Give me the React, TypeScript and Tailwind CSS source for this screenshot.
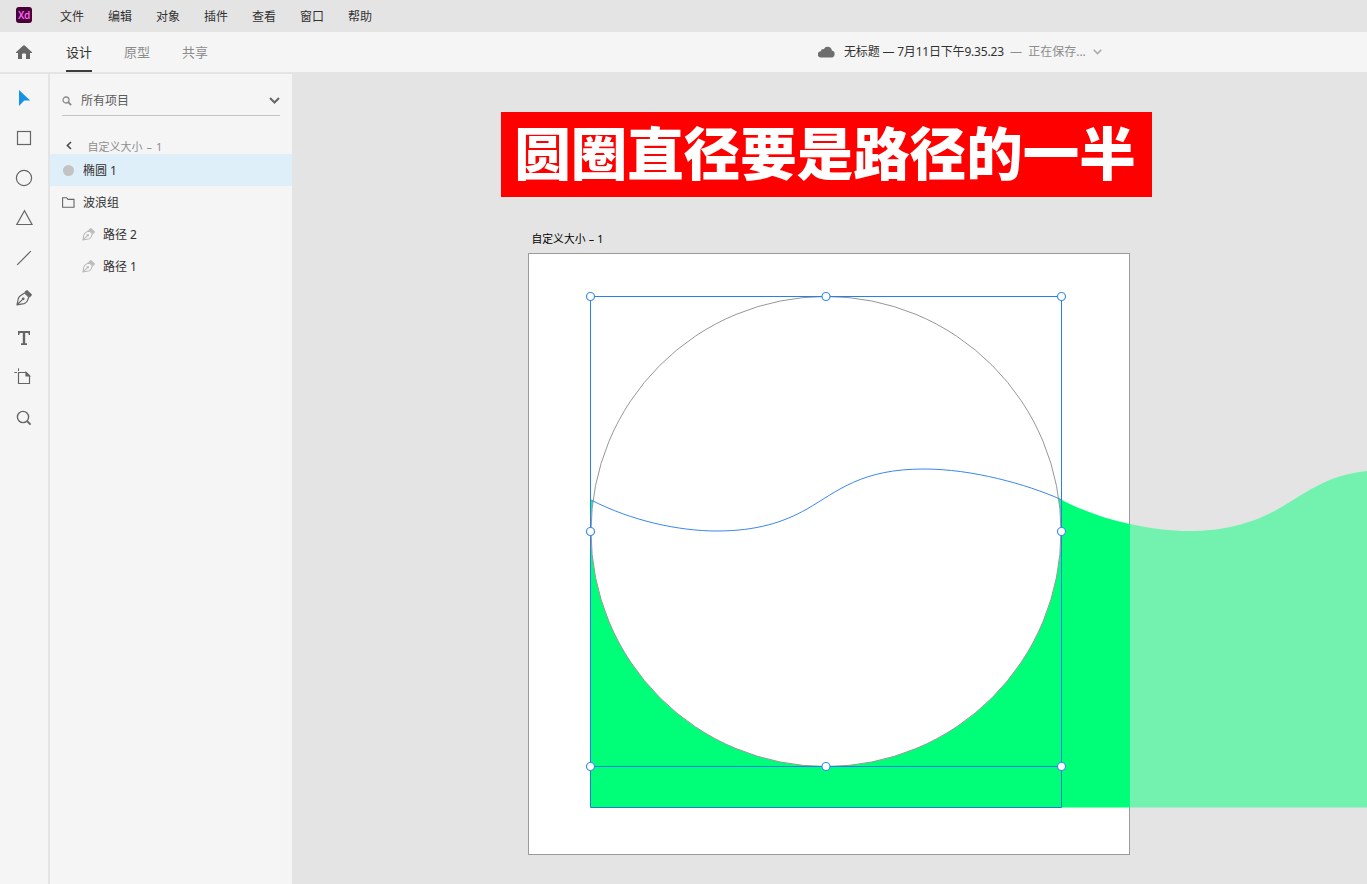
import React from "react";

const menus = ["文件", "编辑", "对象", "插件", "查看", "窗口", "帮助"];

function PenIcon({ className, sw }: { className: string; sw: number }) {
  return (
    <svg className={className} viewBox="0 0 16 16" fill="none" stroke="currentColor" strokeWidth={sw} strokeLinejoin="round">
      <path d="M1 14.8 L2.2 9 Q2.7 7 4.4 5.7 L8.6 2.9 L12.8 7.1 L11.2 11 Q10.2 13 8 13.6 Z M1 14.8 L6.4 9.6" />
      <circle cx="7.2" cy="8.8" r="0.8" fill="currentColor" />
      <path d="M9.2 1.9 L11 0.7 L15.3 4.8 L13.8 6.6 Z" fill="currentColor" />
    </svg>
  );
}

function Tool({ children }: { children: React.ReactNode }) {
  return <div className="flex h-10 w-12 shrink-0 items-center justify-center text-[#666]">{children}</div>;
}

function ToolRail() {
  const line = { width: 24, height: 24, viewBox: "0 0 24 24", fill: "none", stroke: "currentColor", strokeWidth: 1.2 };
  return (
    <nav className="flex w-[50px] shrink-0 flex-col border-r-2 border-[#e4e4e4] bg-[#f5f5f5] pt-1">
      <Tool>
        <svg width="24" height="24" viewBox="0 0 24 24"><path d="M7 4 V20 L12.2 14.5 H18.2 Z" fill="#1592e6" /></svg>
      </Tool>
      <Tool><svg {...line}><rect x="5.5" y="5.5" width="13" height="13" /></svg></Tool>
      <Tool><svg {...line}><circle cx="12" cy="12" r="7.6" /></svg></Tool>
      <Tool><svg {...line}><path d="M12.5 4.8 L20 18.5 H4.8 Z" /></svg></Tool>
      <Tool><svg {...line}><path d="M5.2 18.8 L18.8 5.2" /></svg></Tool>
      <Tool><PenIcon className="-mt-px h-4 w-4" sw={1.2} /></Tool>
      <Tool>
        <svg width="24" height="24" viewBox="0 0 24 24" fill="currentColor">
          <path d="M6 5 H18 V9 H16.8 L16.2 7 H13.2 V17.3 H15 V19 H9 V17.3 H10.8 V7 H7.8 L7.2 9 H6 Z" />
        </svg>
      </Tool>
      <Tool>
        <svg {...line}>
          <path d="M6.5 6.5 H14.3 L17.5 9.7 V17.5 H6.5 Z" />
          <path d="M14 6.5 V10 H17.5 Z" fill="currentColor" />
          <path d="M2.3 6.5 H5 M6.5 2.3 V5" strokeWidth="1" />
        </svg>
      </Tool>
      <Tool><svg {...line} strokeWidth="1.4"><circle cx="11" cy="11" r="5.6" /><path d="M15 15 L18.6 18.6" strokeWidth="1.8" /></svg></Tool>
    </nav>
  );
}

function LayersPanel() {
  return (
    <aside className="flex w-[242px] shrink-0 flex-col bg-[#f5f5f5] text-[12px] text-[#323232]">
      <div className="mx-3 mt-3 flex h-[30px] items-center border-b border-[#c4c4c4] text-[#5c5c5c]">
        <svg width="10" height="10" viewBox="0 0 10 10" fill="none" stroke="#8a8a8a" strokeWidth="1.3">
          <circle cx="4" cy="4" r="3" /><path d="M6.2 6.2 L9.2 9.2" strokeWidth="1.8" />
        </svg>
        <span className="ml-[9px] flex-1">所有项目</span>
        <svg width="11" height="7" viewBox="0 0 11 7" fill="none" stroke="#666" strokeWidth="2"><path d="M1 1 L5.5 5.5 L10 1" /></svg>
      </div>
      <div className="flex h-[38px] items-end pl-4 text-[#8e8e8e]">
        <svg className="mb-1" width="6" height="9" viewBox="0 0 6 9" fill="none" stroke="#4b4b4b" strokeWidth="1.6"><path d="M5 1 L1.4 4.5 L5 8" /></svg>
        <span className="ml-[15.5px] text-[11px] leading-[15px] [word-spacing:1.2px]">自定义大小 – 1</span>
      </div>
      <div className="flex h-8 items-center bg-[#dfeff9] pl-[13px]">
        <span className="h-[11px] w-[11px] rounded-full bg-[#c3c3c3]" />
        <span className="ml-[9px] pt-0.5">椭圆 1</span>
      </div>
      <div className="flex h-8 items-center pl-3">
        <svg width="13" height="11" viewBox="0 0 13 11" fill="none" stroke="#666" strokeWidth="1.1"><path d="M.6 10.3 V.7 H4.6 L6 2.4 H12 V10.3 Z" /></svg>
        <span className="ml-2 pt-0.5">波浪组</span>
      </div>
      {["路径 2", "路径 1"].map((name) => (
        <div key={name} className="flex h-8 items-center pl-8">
          <PenIcon className="h-[13px] w-[13px] text-[#bcbcbc]" sw={1.3} />
          <span className="ml-2 pt-0.5">{name}</span>
        </div>
      ))}
    </aside>
  );
}

const crest = "C632 521 679 531 717 531 C757 531 784 522 807 509 C838 491 861 469 924 469 C972 469 1026 484 1061 499.5";
const handles = [[590.5, 296.5], [826, 296.5], [1061.5, 296.5], [590.5, 531.5], [1061.5, 531.5], [590.5, 766.5], [826, 766.5], [1061.5, 766.5]];

function Artwork() {
  return (
    <svg className="block h-[601px] w-[838px]" viewBox="529 254 838 601" fill="none">
      <path d="M1130 524 C1150 528.5 1172 531 1188 531 C1228 531 1255 522 1278 509 C1305 494 1326 475 1367 471 V807.5 H1130 Z" fill="#00ff78" fillOpacity=".5" />
      <path d={`M591 500 ${crest} C1085 512 1107 519 1130 524 V807.5 H591 Z`} fill="#00ff78" />
      <circle cx="826" cy="531.5" r="235" fill="#fff" stroke="#979797" />
      <path d={`M591 500 ${crest}`} stroke="#3a87ec" />
      <path d="M1061.5 499 V807.5 H590.5 V500" stroke="#2280c8" />
      <path d="M590.5 296.5 H1061.5 V766.5 H590.5 Z" stroke="#2680eb" />
      {handles.map(([x, y]) => <circle key={`${x}-${y}`} cx={x} cy={y} r="4" fill="#fff" stroke="#3b8bed" strokeWidth="1.2" />)}
    </svg>
  );
}

function Canvas() {
  return (
    <main className="flex min-w-0 flex-1 flex-col overflow-hidden bg-[#e4e4e4]">
      <div className="ml-[209px] mt-[38px] flex h-[85px] w-[651px] shrink-0 items-center justify-center whitespace-nowrap bg-[#ff0000] pr-[3px] text-[56.5px] font-black leading-none text-white">
        圆圈直径要是路径的一半
      </div>
      <div className="ml-[239.5px] mt-[34px] h-[22px] shrink-0 text-[10.8px] leading-[16px] text-black [word-spacing:.4px]">自定义大小 – 1</div>
      <div className="ml-[236px] h-[602px] w-[602px] shrink-0 border border-[#9b9b9b] bg-white">
        <Artwork />
      </div>
    </main>
  );
}

export default function App() {
  return (
    <div className="flex h-[884px] w-[1367px] flex-col overflow-hidden bg-[#e4e4e4] font-['Noto_Sans','Noto_Sans_CJK_SC',sans-serif]">
      <header className="flex h-8 shrink-0 items-center pl-4 text-[12px] text-[#323232]">
        <div className="-mt-0.5 flex h-4 w-4 items-center justify-center rounded-[3px] bg-[#470137] text-[10px] font-semibold leading-none tracking-[-0.3px] text-[#ff61f6]">Xd</div>
        <div className="ml-7 flex gap-6 pt-0.5">
          {menus.map((m) => <span key={m}>{m}</span>)}
        </div>
      </header>
      <div className="flex h-[42px] shrink-0 items-center border-b-2 border-[#e4e4e4] bg-[#f5f5f5] pl-4 text-[13px]">
        <svg width="16" height="15" viewBox="0 0 16 15" fill="#666"><path d="M7 .8 Q8 -.2 9 .8 L16 7.2 V8 H14 V14 H10 V9.5 Q10 8.5 9 8.5 H7 Q6 8.5 6 9.5 V14 H2 V8 H0 V7.2 Z" /></svg>
        <div className="ml-[34px] flex h-full gap-8 leading-[40px] text-[#8c8c8c]">
          <span className="border-b-2 border-[#3c3c3c] text-[#323232]">设计</span>
          <span>原型</span>
          <span>共享</span>
        </div>
        <div className="ml-[610px] flex items-center whitespace-nowrap text-[12px]">
          <svg width="17" height="12" viewBox="0 0 17 12" fill="#6e6e6e"><path d="M3 11.5 A3 3 0 0 1 2.8 5.3 A2.5 2.5 0 0 1 5.8 3.2 A4.2 4.2 0 0 1 13.8 4.6 A3.5 3.5 0 0 1 13.6 11.5 Z" /></svg>
          <span className="ml-[9px] w-[160px] tracking-[-0.19px] text-[#323232]">无标题 — 7月11日下午9.35.23</span>
          <span className="ml-1.5 text-[#8c8c8c]"><span className="mr-[3px]">—</span> 正在保存...</span>
          <svg className="ml-[7px]" width="9" height="6" viewBox="0 0 9 6" fill="none" stroke="#a8a8a8" strokeWidth="1.5"><path d="M.7 .8 L4.5 4.6 L8.3 .8" /></svg>
        </div>
      </div>
      <div className="flex min-h-0 flex-1">
        <ToolRail />
        <LayersPanel />
        <Canvas />
      </div>
    </div>
  );
}
